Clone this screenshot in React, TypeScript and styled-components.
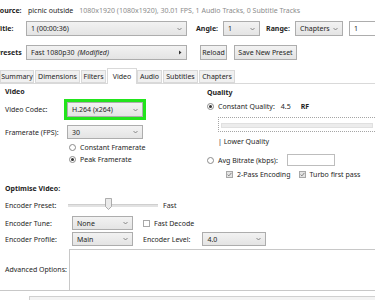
import styled, { createGlobalStyle } from 'styled-components';

const GlobalStyle = createGlobalStyle`
  html, body {
    margin: 0;
    padding: 0;
    background: #ffffff;
  }
`;

const Page = styled.div`
  width: 375px;
  height: 300px;
  overflow: hidden;
  background: #ffffff;
  color: #1e1e1e;
  font-family: 'Noto Sans', 'DejaVu Sans', sans-serif;
  font-size: 7px;
  line-height: 1;
  white-space: nowrap;
`;

const Header = styled.div`
  display: flex;
  flex-direction: column;
  margin-left: -4px;
  padding-top: 4px;
`;

const HeaderRow = styled.div<{ $top: number; $h: number }>`
  display: flex;
  align-items: center;
  height: ${(p) => p.$h}px;
  margin-top: ${(p) => p.$top}px;
`;

const Bold = styled.span<{ $w?: number; $ml?: number }>`
  font-weight: 700;
  width: ${(p) => (p.$w ? `${p.$w}px` : 'auto')};
  margin-left: ${(p) => p.$ml ?? 0}px;
  flex-shrink: 0;
`;

const Plain = styled.span<{ $ml?: number; $muted?: boolean }>`
  margin-left: ${(p) => p.$ml ?? 0}px;
  color: ${(p) => (p.$muted ? '#8c8c8c' : '#1e1e1e')};
  flex-shrink: 0;
`;

const SelectBox = styled.div<{ $w: number; $h?: number; $ml?: number; $flat?: boolean }>`
  display: flex;
  align-items: center;
  justify-content: space-between;
  gap: 2px;
  box-sizing: border-box;
  width: ${(p) => p.$w}px;
  height: ${(p) => p.$h ?? 15}px;
  margin-left: ${(p) => p.$ml ?? 0}px;
  padding: 0 4px 0 4px;
  border: 1px solid #adadad;
  background: ${(p) => (p.$flat ? '#ffffff' : 'linear-gradient(#f2f2f2, #e4e4e4)')};
  flex-shrink: 0;
`;

const Chevron = () => (
  <svg width="5" height="4" viewBox="0 0 5 4">
    <polyline points="0.5,1 2.5,3 4.5,1" fill="none" stroke="#707070" strokeWidth="0.8" />
  </svg>
);

const Arrow = () => (
  <svg width="4" height="5" viewBox="0 0 4 5">
    <polygon points="1,0.5 3.5,2.5 1,4.5" fill="#333" />
  </svg>
);

const Button = styled.div<{ $w: number; $ml: number }>`
  display: flex;
  align-items: center;
  justify-content: center;
  box-sizing: border-box;
  width: ${(p) => p.$w}px;
  height: 15px;
  margin-left: ${(p) => p.$ml}px;
  border: 1px solid #adadad;
  background: linear-gradient(#f2f2f2, #e4e4e4);
  flex-shrink: 0;
`;

const Italic = styled.span`
  font-style: italic;
  margin-left: 3px;
`;

const Tabs = styled.div`
  display: flex;
  align-items: flex-end;
  height: 15px;
  margin-top: 8px;
  border-bottom: 1px solid #d9d9d9;
`;

const Tab = styled.div<{ $w: number; $active?: boolean }>`
  display: flex;
  align-items: center;
  justify-content: center;
  box-sizing: border-box;
  width: ${(p) => p.$w}px;
  height: ${(p) => (p.$active ? 16 : 13)}px;
  margin-right: ${(p) => (p.$active ? 0 : 1)}px;
  margin-bottom: ${(p) => (p.$active ? -1 : 0)}px;
  border: 1px solid #d9d9d9;
  border-bottom: ${(p) => (p.$active ? 'none' : '1px solid #d9d9d9')};
  background: ${(p) => (p.$active ? '#ffffff' : '#f0f0f0')};
  flex-shrink: 0;
`;

const Upper = styled.div`
  display: flex;
  height: 97px;
`;

const LeftCol = styled.div`
  display: flex;
  flex-direction: column;
  width: 200px;
  padding-left: 5px;
  box-sizing: border-box;
`;

const RightCol = styled.div`
  display: flex;
  flex-direction: column;
  flex: 1;
  padding-left: 7px;
`;

const Heading = styled.div<{ $top: number }>`
  font-weight: 700;
  height: 10px;
  display: flex;
  align-items: center;
  margin-top: ${(p) => p.$top}px;
`;

const FormRow = styled.div<{ $top: number; $h: number }>`
  display: flex;
  align-items: center;
  height: ${(p) => p.$h}px;
  margin-top: ${(p) => p.$top}px;
`;

const FieldLabel = styled.span<{ $w: number }>`
  width: ${(p) => p.$w}px;
  flex-shrink: 0;
`;

const Highlight = styled.div`
  box-sizing: border-box;
  width: 82px;
  height: 21px;
  margin-left: -3px;
  border: 3px solid #22e41c;
  flex-shrink: 0;
`;

const Radio = styled.span<{ $on?: boolean }>`
  position: relative;
  box-sizing: border-box;
  width: 7px;
  height: 7px;
  border-radius: 50%;
  border: 1px solid #8a8a8a;
  background: #ffffff;
  flex-shrink: 0;
  margin-right: 4px;
  &::after {
    content: '';
    display: ${(p) => (p.$on ? 'block' : 'none')};
    position: absolute;
    left: 1px;
    top: 1px;
    width: 3px;
    height: 3px;
    border-radius: 50%;
    background: #333333;
  }
`;

const Check = styled.span<{ $on?: boolean; $ml?: number }>`
  display: flex;
  align-items: center;
  justify-content: center;
  box-sizing: border-box;
  width: 7px;
  height: 7px;
  margin-left: ${(p) => p.$ml ?? 0}px;
  margin-right: 4px;
  border: 1px solid #a8a8a8;
  background: ${(p) => (p.$on ? '#e3e3e3' : '#ffffff')};
  flex-shrink: 0;
`;

const Tick = () => (
  <svg width="5" height="5" viewBox="0 0 5 5">
    <polyline points="0.6,2.6 1.9,3.9 4.4,0.9" fill="none" stroke="#7a7a7a" strokeWidth="0.9" />
  </svg>
);

const QualitySlider = styled.div`
  display: flex;
  align-items: flex-end;
  box-sizing: border-box;
  height: 15px;
  margin-top: 5px;
  margin-left: 11px;
  padding: 0 2px 3px;
  border-top: 1px dotted #a5a5a5;
  border-bottom: 1px dotted #a5a5a5;
  border-left: 1px dotted #a5a5a5;
`;

const Track = styled.div`
  flex: 1;
  height: 3px;
  background: #ececec;
  border: 1px solid #e0e0e0;
`;

const Input = styled.div<{ $w: number; $ml: number }>`
  box-sizing: border-box;
  width: ${(p) => p.$w}px;
  height: 12px;
  margin-left: ${(p) => p.$ml}px;
  border: 1px solid #bdbdbd;
  background: #ffffff;
`;

const Lower = styled.div`
  display: flex;
  flex-direction: column;
  padding-left: 5px;
`;

const PresetSlider = styled.div`
  position: relative;
  width: 90px;
  height: 14px;
  display: flex;
  align-items: center;
  &::before {
    content: '';
    flex: 1;
    height: 2px;
    background: #e2e2e2;
    border-top: 1px solid #cfcfcf;
  }
`;

const Thumb = styled.div`
  position: absolute;
  left: 37px;
  top: 0;
`;

const Advanced = styled.div`
  display: flex;
  align-items: center;
  height: 41px;
  margin-top: 3px;
  margin-left: -5px;
  padding-left: 5px;
  border-bottom: 1px solid #c8c8c8;
`;

const TextArea = styled.div`
  align-self: stretch;
  flex: 1;
  margin-left: 2px;
  border-top: 1px solid #c8c8c8;
  border-left: 1px solid #c8c8c8;
`;

const Footer = styled.div`
  height: 10px;
  margin-top: 5px;
  margin-left: 29px;
  border-top: 1px solid #d0d0d0;
  border-left: 1px solid #d0d0d0;
  background: #f3f3f3;
`;

export default function App() {
  return (
    <Page>
      <GlobalStyle />
      <Header>
        <HeaderRow $top={0} $h={12}>
          <Bold $w={32}>Source:</Bold>
          <Plain>picnic outside</Plain>
          <Plain $ml={6} $muted>
            1080x1920 (1080x1920), 30.01 FPS, 1 Audio Tracks, 0 Subtitle Tracks
          </Plain>
        </HeaderRow>
        <HeaderRow $top={5} $h={15}>
          <Bold $w={30}>Title:</Bold>
          <SelectBox $w={161}>
            <span>1 (00:00:36)</span>
            <Chevron />
          </SelectBox>
          <Bold $ml={9}>Angle:</Bold>
          <SelectBox $w={37} $ml={5}>
            <span>1</span>
            <Chevron />
          </SelectBox>
          <Bold $ml={6}>Range:</Bold>
          <SelectBox $w={48} $ml={5}>
            <span>Chapters</span>
            <Chevron />
          </SelectBox>
          <SelectBox $w={40} $ml={6} $flat>
            <span>1</span>
          </SelectBox>
        </HeaderRow>
        <HeaderRow $top={9} $h={15}>
          <Bold $w={30}>Presets</Bold>
          <SelectBox $w={161}>
            <span>
              Fast 1080p30<Italic>(Modified)</Italic>
            </span>
            <Arrow />
          </SelectBox>
          <Button $w={27} $ml={13}>Reload</Button>
          <Button $w={63} $ml={7}>Save New Preset</Button>
        </HeaderRow>
      </Header>
      <Tabs>
        <Tab $w={34}>Summary</Tab>
        <Tab $w={45}>Dimensions</Tab>
        <Tab $w={25}>Filters</Tab>
        <Tab $w={30} $active>
          Video
        </Tab>
        <Tab $w={25}>Audio</Tab>
        <Tab $w={35}>Subtitles</Tab>
        <Tab $w={36}>Chapters</Tab>
      </Tabs>
      <Upper>
        <LeftCol>
          <Heading $top={2}>Video</Heading>
          <FormRow $top={3} $h={21}>
            <FieldLabel $w={62}>Video Codec:</FieldLabel>
            <Highlight>
              <SelectBox $w={76} $h={15}>
                <span>H.264 (x264)</span>
                <Chevron />
              </SelectBox>
            </Highlight>
          </FormRow>
          <FormRow $top={5} $h={14}>
            <FieldLabel $w={62}>Framerate (FPS):</FieldLabel>
            <SelectBox $w={76} $h={14}>
              <span>30</span>
              <Chevron />
            </SelectBox>
          </FormRow>
          <FormRow $top={2} $h={12}>
            <FieldLabel $w={64} />
            <Radio />
            <span>Constant Framerate</span>
          </FormRow>
          <FormRow $top={0} $h={12}>
            <FieldLabel $w={64} />
            <Radio $on />
            <span>Peak Framerate</span>
          </FormRow>
        </LeftCol>
        <RightCol>
          <Heading $top={3}>Quality</Heading>
          <FormRow $top={3} $h={12}>
            <Radio $on />
            <span>Constant Quality:</span>
            <Plain $ml={6}>4.5</Plain>
            <Bold $ml={10}>RF</Bold>
          </FormRow>
          <QualitySlider>
            <Track />
          </QualitySlider>
          <FormRow $top={4} $h={10}>
            <Plain $ml={11}>| Lower Quality</Plain>
          </FormRow>
          <FormRow $top={8} $h={12}>
            <Radio />
            <span>Avg Bitrate (kbps):</span>
            <Input $w={48} $ml={9} />
          </FormRow>
          <FormRow $top={3} $h={10}>
            <Check $on $ml={19}>
              <Tick />
            </Check>
            <span>2-Pass Encoding</span>
            <Check $on $ml={8}>
              <Tick />
            </Check>
            <span>Turbo first pass</span>
          </FormRow>
        </RightCol>
      </Upper>
      <Lower>
        <Heading $top={2}>Optimise Video:</Heading>
        <FormRow $top={5} $h={14}>
          <FieldLabel $w={63}>Encoder Preset:</FieldLabel>
          <PresetSlider>
            <Thumb>
              <svg width="7" height="12" viewBox="0 0 7 12">
                <path d="M0.5 0.5 H6.5 V8.5 L3.5 11.5 L0.5 8.5 Z" fill="#eaeaea" stroke="#9a9a9a" strokeWidth="0.8" />
              </svg>
            </Thumb>
          </PresetSlider>
          <Plain $ml={5}>Fast</Plain>
        </FormRow>
        <FormRow $top={4} $h={14}>
          <FieldLabel $w={67}>Encoder Tune:</FieldLabel>
          <SelectBox $w={61} $h={14}>
            <span>None</span>
            <Chevron />
          </SelectBox>
          <Check $ml={10} />
          <span>Fast Decode</span>
        </FormRow>
        <FormRow $top={2} $h={14}>
          <FieldLabel $w={67}>Encoder Profile:</FieldLabel>
          <SelectBox $w={61} $h={14}>
            <span>Main</span>
            <Chevron />
          </SelectBox>
          <Plain $ml={10}>Encoder Level:</Plain>
          <SelectBox $w={64} $h={14} $ml={12}>
            <span>4.0</span>
            <Chevron />
          </SelectBox>
        </FormRow>
        <Advanced>
          <FieldLabel $w={62}>Advanced Options:</FieldLabel>
          <TextArea />
        </Advanced>
      </Lower>
      <Footer />
    </Page>
  );
}
